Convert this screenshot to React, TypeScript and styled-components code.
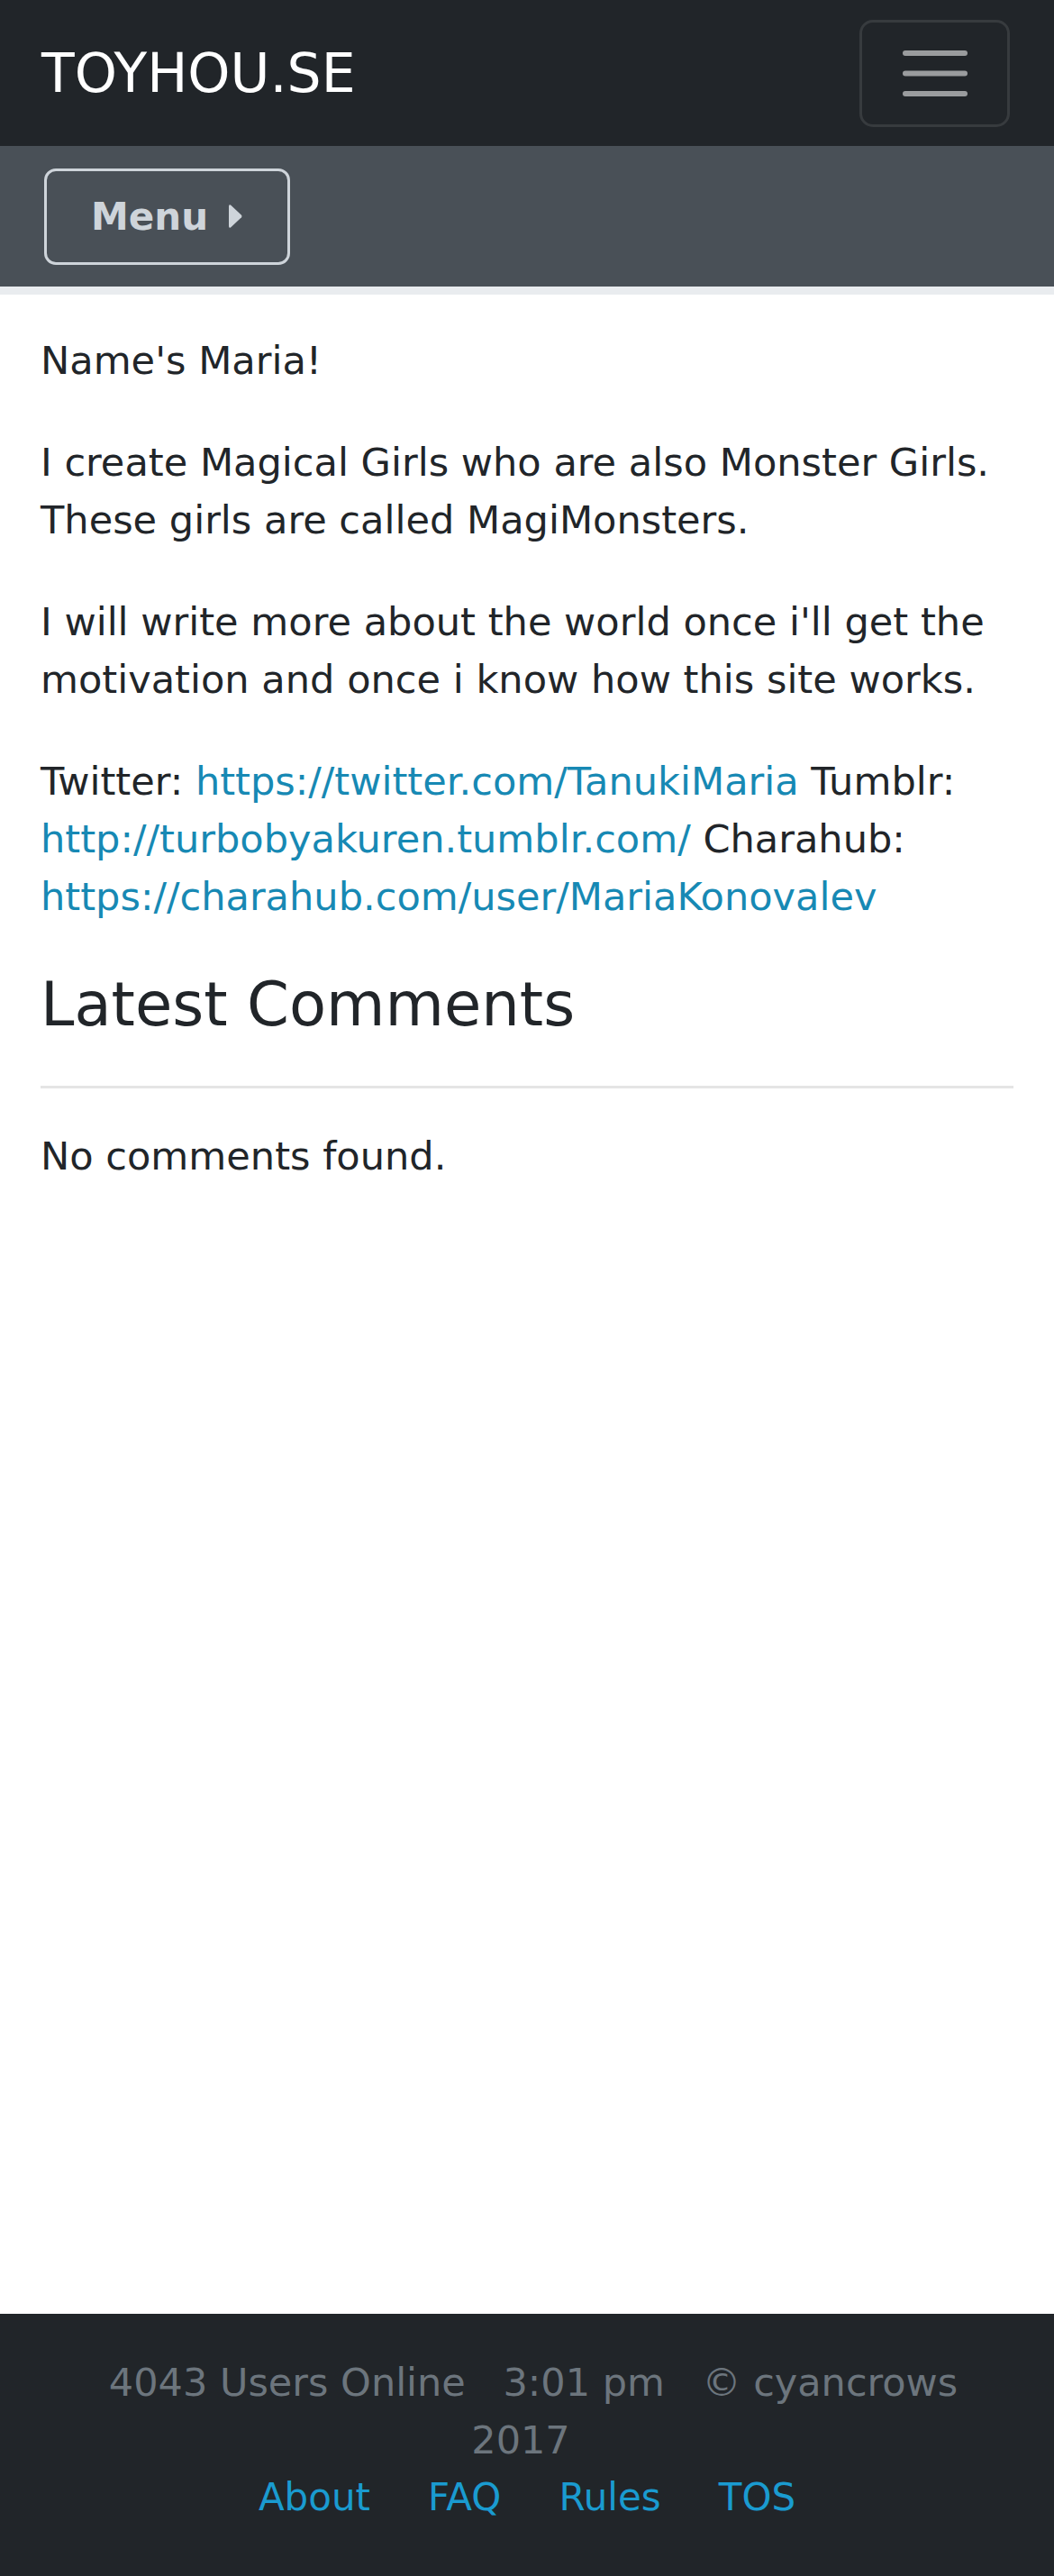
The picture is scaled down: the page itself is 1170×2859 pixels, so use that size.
import styled, { createGlobalStyle } from 'styled-components';

const GlobalStyle = createGlobalStyle`
  html, body {
    margin: 0;
    padding: 0;
    background: #fff;
  }
  body {
    font-family: "DejaVu Sans", "Noto Sans", sans-serif;
    font-size: 43.1px;
    line-height: 64px;
    color: #212529;
  }
  * {
    box-sizing: border-box;
  }
`;

const Page = styled.div`
  min-height: 100vh;
  display: flex;
  flex-direction: column;
`;

const Navbar = styled.nav`
  height: 162px;
  background-color: #212529;
  display: flex;
  align-items: center;
  justify-content: space-between;
  padding: 0 49px 0 46px;
`;

const Brand = styled.a`
  font-size: 60px;
  line-height: 90px;
  color: #fff;
  text-decoration: none;
`;

const Toggler = styled.button`
  width: 167px;
  height: 119px;
  display: flex;
  align-items: center;
  justify-content: center;
  background: transparent;
  border: 3px solid rgba(255, 255, 255, 0.1);
  border-radius: 15px;
  padding: 0;
`;

const MenuBar = styled.div`
  height: 165px;
  background-color: #495057;
  border-bottom: 9px solid #e9ecef;
  display: flex;
  align-items: center;
  padding: 0 0 0 49px;
`;

const MenuButton = styled.button`
  display: flex;
  align-items: center;
  gap: 23px;
  height: 107px;
  padding: 0 50px 0 49px;
  background: transparent;
  border: 3px solid #ced4da;
  border-radius: 13px;
  color: #ced4da;
  font-family: "DejaVu Sans", sans-serif;
  font-size: 42px;
  font-weight: bold;
  line-height: 63px;
`;

const Content = styled.main`
  flex: 1;
  padding: 41px 45px 0;
`;

const Paragraph = styled.p`
  margin: 0 0 49px;
`;

const Link = styled.a<{ $footer?: boolean }>`
  color: ${props => props.$footer ? '#1a9bd0' : '#1789b4'};
  text-decoration: none;
`;

const SectionTitle = styled.h3`
  margin: 0;
  font-size: 67.2px;
  line-height: 79px;
  font-weight: normal;
`;

const Divider = styled.hr`
  margin: 50px 0 43px;
  border: 0;
  border-top: 3px solid #e5e5e5;
`;

const Footer = styled.footer`
  background-color: #212529;
  padding: 44px 60px 55px;
  text-align: center;
  color: #6c757d;
  font-size: 43px;
`;

const InfoLine = styled.div``;

const InfoItem = styled.span<{ $side?: 'left' | 'right' }>`
  margin-left: ${props => props.$side === 'right' ? '0' : '14px'};
  margin-right: ${props => props.$side === 'left' ? '0' : '14px'};
`;

const FooterLinks = styled.div`
  display: flex;
  justify-content: center;
  gap: 64px;
  font-size: 42px;
`;

function HamburgerIcon() {
  return (
    <svg width="72" height="51" viewBox="0 0 72 51">
      <g stroke="rgba(255,255,255,0.55)" strokeWidth="6" strokeLinecap="round">
        <line x1="3" y1="3" x2="69" y2="3" />
        <line x1="3" y1="25.5" x2="69" y2="25.5" />
        <line x1="3" y1="48" x2="69" y2="48" />
      </g>
    </svg>
  );
}

function CaretRight() {
  return (
    <svg width="15" height="28" viewBox="0 0 15 28">
      <path d="M2 1.5 Q0 0.5 0 3 L0 25 Q0 27.5 2 26.5 L14 15.2 Q15 14 14 12.8 Z" fill="#ced4da" />
    </svg>
  );
}

export default function App() {
  return (
    <Page>
      <GlobalStyle />
      <Navbar>
        <Brand href="#">TOYHOU.SE</Brand>
        <Toggler aria-label="Toggle navigation">
          <HamburgerIcon />
        </Toggler>
      </Navbar>

      <MenuBar>
        <MenuButton>
          Menu
          <CaretRight />
        </MenuButton>
      </MenuBar>

      <Content>
        <Paragraph>Name's Maria!</Paragraph>
        <Paragraph>
          I create Magical Girls who are also Monster Girls. These girls are called MagiMonsters.
        </Paragraph>
        <Paragraph>
          I will write more about the world once i'll get the motivation and once i know how this site works.
        </Paragraph>
        <Paragraph>
          Twitter: <Link href="#">https://twitter.com/TanukiMaria</Link> Tumblr:{' '}
          <Link href="#">http://turbobyakuren.tumblr.com/</Link> Charahub:{' '}
          <Link href="#">https://charahub.com/user/MariaKonovalev</Link>
        </Paragraph>

        <SectionTitle>Latest Comments</SectionTitle>
        <Divider />
        <Paragraph>No comments found.</Paragraph>
      </Content>

      <Footer>
        <InfoLine>
          <InfoItem>4043 Users Online</InfoItem> <InfoItem>3:01 pm</InfoItem>{' '}
          <InfoItem $side="left">© cyancrows</InfoItem> <InfoItem $side="right">2017</InfoItem>
        </InfoLine>
        <FooterLinks>
          <Link $footer href="#">About</Link>
          <Link $footer href="#">FAQ</Link>
          <Link $footer href="#">Rules</Link>
          <Link $footer href="#">TOS</Link>
        </FooterLinks>
      </Footer>
    </Page>
  );
}
